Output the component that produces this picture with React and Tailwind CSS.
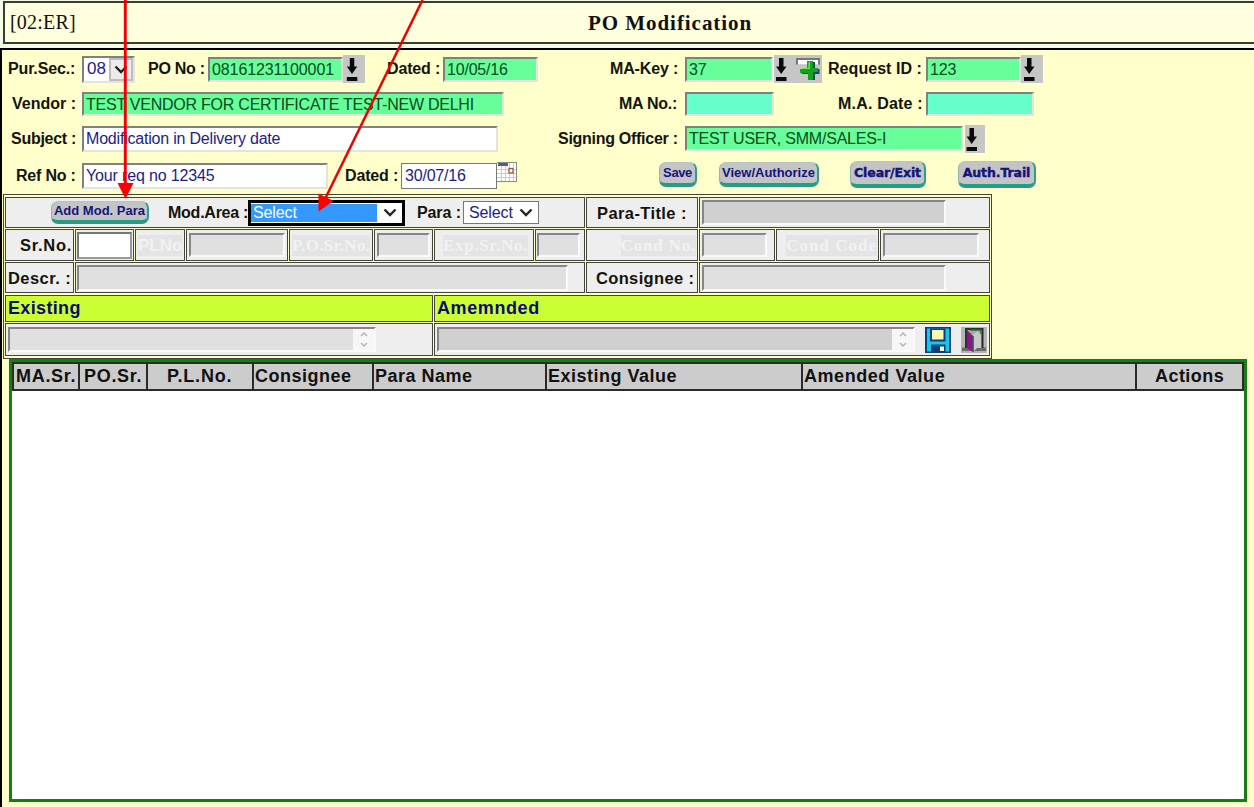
import React from "react";

const BLUE = "text-[#1c1c8c]";
const GREEN_TEXT = "text-[#0a4a1e]";
const SUNKEN = "border-2 border-t-[#808080] border-l-[#808080] border-b-[#e4e4dc] border-r-[#e4e4dc]";

function Label({ size = "text-[16px]", className = "", children }) {
  return (
    <span className={"block shrink-0 whitespace-pre leading-[18px] font-bold text-[#14140c] " + size + " " + className}>
      {children}
    </span>
  );
}

function Field({ className = "", children }) {
  return (
    <div className={"flex shrink-0 items-center whitespace-pre pt-px pl-[2px] text-[16px] leading-[18px] " + SUNKEN + " " + className}>
      {children}
    </div>
  );
}

function Chevron({ className = "" }) {
  return (
    <svg viewBox="0 0 14 9" className={"h-[9px] w-[14px] " + className} fill="none" stroke="#222" strokeWidth="2.4">
      <path d="M1.5 1.5 L7 7 L12.5 1.5" />
    </svg>
  );
}

function Fetch({ dx = 0, className = "w-[22px]" }) {
  return (
    <svg viewBox="0 0 22 28" preserveAspectRatio="xMinYMin slice" className={"h-[28px] shrink-0 bg-[#c6c6c6] " + className}>
      <g transform={`translate(${dx} 0)`} fill="#0a0a0a">
        <path d="M5 3h4.500v8.500h3L7.200 19 2 11.500h3z" />
        <rect x="2" y="22" width="10.500" height="4" />
      </g>
    </svg>
  );
}

function PlusIcon() {
  return (
    <svg viewBox="0 0 26 28" className="h-[28px] w-[26px] shrink-0 bg-[#c6c6c6]">
      <rect x="0" y="3" width="24" height="6.5" fill="#777" />
      <rect x="2" y="5" width="20" height="4.5" fill="#fff" />
      <path d="M12 7h7v7h4.500v5h-4.500v6h-6v-6h-7v-5H12z" fill="#1d3f6e" />
      <path d="M11 6h6v7h5v4h-5v8h-5v-7H4v-4h7z" fill="#12a51c" />
      <path d="M12.500 7h1.500v7H6v-1h6.500z" fill="#6be05a" />
    </svg>
  );
}

function CalendarIcon() {
  return (
    <svg viewBox="0 0 20 20" className="-mt-[7px] h-[20px] w-[20px] shrink-0">
      <rect width="20" height="20" fill="#8e8a82" />
      <rect x="0" y="1" width="19" height="18" fill="#fff" />
      <rect x="1" y="1" width="10" height="3" fill="#4b5ca8" />
      <path d="M4.500 4v15M8.500 4v15M12.500 1v18M16.500 1v18M0 7.500h19M0 11.500h19M0 15.500h19" stroke="#c9c9dc" strokeWidth="1" />
      <rect x="12" y="6.500" width="4" height="4.500" fill="#fff" stroke="#a5523f" strokeWidth="1.300" />
    </svg>
  );
}

function SaveIcon() {
  return (
    <svg viewBox="0 0 26 26" className="h-[26px] w-[26px] shrink-0">
      <rect width="26" height="26" fill="#0b3f7c" />
      <rect x="2" y="1.500" width="22" height="23" fill="#14c8ea" />
      <rect x="5" y="1.500" width="15.500" height="13" fill="#0b3f7c" />
      <rect x="7" y="3" width="11.500" height="9.500" fill="#fbf7b0" />
      <rect x="6" y="17.500" width="14.500" height="7.500" fill="#0b3f7c" />
      <rect x="15" y="19.500" width="4" height="4.500" fill="#fbf7b0" />
    </svg>
  );
}

function ExitIcon() {
  return (
    <svg viewBox="0 0 26 26" className="h-[26px] w-[26px] shrink-0 bg-[#b4b4b4]">
      <rect x="1" y="20.500" width="24" height="3.500" fill="#6a6a6a" />
      <path d="M5 21V2h16.500v19" fill="#a8a8a8" stroke="#2e2e2e" strokeWidth="2" />
      <path d="M6 3l6 6v16l-6-4z" fill="#8c1390" />
      <path d="M12 8l4-4 4 4v13h-4l-4 4z" fill="#c8c8c8" />
      <path d="M9 3h11v4M12.200 9v16" fill="none" stroke="#1d7a2b" strokeWidth="1.300" />
    </svg>
  );
}

const NORMAL = "text-[13px]";
const BLACK = "font-['DejaVu_Sans',sans-serif] text-[12.5px] tracking-[-0.1px] [-webkit-text-stroke:0.4px_#14147c]";

function Button({ type = NORMAL, className = "", children }) {
  return (
    <button
      className={
        "flex shrink-0 justify-center whitespace-pre rounded-[7px] border border-r-2 border-b-4 border-t-[#b4c4be] border-l-[#8cb8ac] border-r-[#2aa08a] border-b-[#259c86] bg-[#c4c4c4] leading-[16px] font-bold text-[#14147c] " +
        type + " " + className
      }
    >
      {children}
    </button>
  );
}

function Cell({ className = "", children }) {
  return (
    <div className={"flex shrink-0 items-center border border-[#45453a] " + className}>{children}</div>
  );
}

const DARK = "border-2 border-t-[#85858a] border-l-[#85858a] border-b-[#fafafa] border-r-[#fafafa]";

function Disabled({ className = "" }) {
  return <div className={"shrink-0 " + DARK + " " + className} />;
}

function Ghost({ face = "font-['Liberation_Serif',serif]", className = "", children }) {
  return (
    <span className={"block whitespace-pre bg-[#e4e4e4] text-[17px] leading-[21px] font-bold text-[#f2f2f2] " + face + " " + className}>
      {children}
    </span>
  );
}

function Spinner() {
  return (
    <div className="flex h-full w-[21px] flex-col items-center justify-between bg-[#f6f6f6] py-[3px]">
      <svg viewBox="0 0 8 5" className="h-[5px] w-[8px]" fill="none" stroke="#b5b5b5" strokeWidth="1.500"><path d="M1 4l3-3 3 3" /></svg>
      <svg viewBox="0 0 8 5" className="h-[5px] w-[8px]" fill="none" stroke="#b5b5b5" strokeWidth="1.500"><path d="M1 1l3 3 3-3" /></svg>
    </div>
  );
}

function Head({ className = "", children }) {
  return (
    <div className={"shrink-0 whitespace-pre border-r-2 border-[#2a2a2a] text-[18px] leading-[25px] font-bold text-[#111] last:border-r-0 " + className}>
      {children}
    </div>
  );
}

function Pointers() {
  return (
    <svg className="pointer-events-none absolute top-0 left-0 h-[220px] w-[500px]" viewBox="0 0 500 220">
      <path d="M125.300 0V186" stroke="#f00000" strokeWidth="2.900" />
      <path d="M422.500 0L325 199" stroke="#f00000" strokeWidth="2.500" />
      <path d="M117.500 183h16l-8 16z" fill="#ff0000" />
      <path d="M318.500 211.500V193.500l15 7.500z" fill="#ff0000" />
    </svg>
  );
}

export default function App() {
  return (
    <div className="relative h-[807px] w-[1254px] overflow-hidden bg-[#ffffcc] font-['Liberation_Sans',Arial,sans-serif]">
      <header className="flex h-[48px] flex-col bg-[#f4fbe4] pl-[3px]">
        <div className="mt-px flex h-[43px] items-center border-2 border-r-0 border-[#3c3c34] bg-[#ffffdd] font-['Liberation_Serif',serif] text-[#111]">
          <span className="-mt-[2px] ml-[5px] w-[578px] text-[20px] leading-[24px] tracking-[0.2px]">[02:ER]</span>
          <h1 className="whitespace-pre text-[21px] leading-[24px] font-bold tracking-[0.95px]">PO Modification</h1>
        </div>
      </header>

      <main className="h-[760px] border-t-2 border-l-2 border-black">
        <section className="h-[144px]">
          <div className="flex h-[38px] items-center">
            <Label className="ml-[6px] w-[74px] tracking-[-0.15px]">Pur.Sec.:</Label>
            <div className={"flex h-[27px] w-[53px] items-center bg-white text-[17px] " + SUNKEN + " " + BLUE}>
              <span className="w-[25px] pl-[3px]">08</span>
              <span className="flex h-full w-[24px] items-center justify-center border-2 border-[#bdbdbd] bg-[#ececec]"><Chevron /></span>
            </div>
            <Label className="ml-[13px] w-[60px] tracking-[-0.25px]">PO No :</Label>
            <Field className={"h-[25px] w-[135px] bg-[#66ff99] tracking-[-0.1px] " + GREEN_TEXT}>08161231100001</Field>
            <Fetch dx={1.800} />
            <Label className="ml-[22px] w-[56px] tracking-[-0.15px]">Dated :</Label>
            <Field className={"h-[25px] w-[95px] bg-[#66ff99] tracking-[-0.2px] " + GREEN_TEXT}>10/05/16</Field>
            <Label className="ml-[72px] w-[75px] tracking-[-0.15px]">MA-Key :</Label>
            <Field className={"h-[25px] w-[88px] bg-[#66ff99] tracking-[-0.2px] " + GREEN_TEXT}>37</Field>
            <Fetch className="ml-px w-[22px]" />
            <PlusIcon />
            <Label className="ml-[6px] w-[98px] tracking-[0.05px]">Request ID :</Label>
            <Field className={"h-[25px] w-[95px] bg-[#66ff99] tracking-[-0.2px] " + GREEN_TEXT}>123</Field>
            <Fetch dx={1} />
          </div>
          <div className="flex h-[32px] items-center">
            <Label className="ml-[10px] w-[70px]">Vendor :</Label>
            <Field className={"h-[24px] w-[422px] bg-[#66ff99] tracking-[-0.24px] " + GREEN_TEXT}>TEST VENDOR FOR CERTIFICATE TEST-NEW DELHI</Field>
            <Label className="ml-[115px] w-[66px] tracking-[-0.25px]">MA No.:</Label>
            <Field className="h-[24px] w-[89px] bg-[#66ffcc]" />
            <Label className="ml-[64px] w-[88px] tracking-[0.2px]">M.A. Date :</Label>
            <Field className="h-[24px] w-[108px] bg-[#66ffcc]" />
          </div>
          <div className="flex h-[37px] items-center">
            <Label className="ml-[9px] w-[71px] tracking-[-0.28px]">Subject :</Label>
            <Field className={"h-[26px] w-[416px] bg-white tracking-[-0.2px] " + BLUE}>Modification in Delivery date</Field>
            <Label className="ml-[60px] w-[127px] tracking-[-0.28px]">Signing Officer :</Label>
            <Field className={"h-[25px] w-[278px] bg-[#66ff99] tracking-[-0.2px] " + GREEN_TEXT}>TEST USER, SMM/SALES-I</Field>
            <Fetch dx={-0.500} className="ml-[2px] w-[20px]" />
          </div>
          <div className="flex h-[37px] items-center">
            <Label className="ml-[14px] w-[66px] tracking-[-0.2px]">Ref No :</Label>
            <Field className={"h-[26px] w-[246px] bg-white tracking-[-0.15px] " + BLUE}>Your req no 12345</Field>
            <Label className="ml-[17px] w-[56px] tracking-[-0.15px]">Dated :</Label>
            <div className={"flex h-[26px] w-[96px] items-center border border-[#777] bg-white pt-px pl-[3px] text-[16px] tracking-[-0.2px] " + BLUE}>30/07/16</div>
            <CalendarIcon />
            <Button className="-mt-[2px] ml-[142px] h-[25px] w-[38px] pt-[2px] tracking-[-0.4px]">Save</Button>
            <Button className="-mt-[2px] ml-[22px] h-[25px] w-[100px] pt-[2px]">View/Authorize</Button>
            <Button type={BLACK} className="-mt-[2px] ml-[31px] h-[27px] w-[76px] pt-[3px]">Clear/Exit</Button>
            <Button type={BLACK} className="-mt-[2px] ml-[32px] h-[27px] w-[78px] pt-[3px]">Auth.Trail</Button>
          </div>
        </section>

        <section className="ml-px flex h-[165px] w-[989px] flex-col border border-[#45453a] px-px pt-[2px]">
          <div className="mb-px flex h-[31px] gap-px">
            <Cell className="w-[580px] bg-[#eeeeee]">
              <Button className="ml-[45px] h-[23px] w-[98px] pt-px">Add Mod. Para</Button>
              <Label className="ml-[19px] w-[80px] tracking-[-0.25px]">Mod.Area :</Label>
              <div className="flex h-[26px] w-[157px] items-center border-[3px] border-black bg-white">
                <span className="h-[18px] w-[126px] bg-[#3399ff] pl-[2px] text-[16px] leading-[18px] tracking-[-0.1px] text-white">Select</span>
                <span className="flex flex-1 justify-center"><Chevron /></span>
              </div>
              <Label className="ml-[12px] w-[46px] tracking-[-0.1px]">Para :</Label>
              <div className={"flex h-[23px] w-[76px] items-center border border-[#777] bg-white pl-[5px] text-[16px] tracking-[-0.1px] " + BLUE}>
                <span className="w-[50px]">Select</span>
                <Chevron />
              </div>
            </Cell>
            <Cell className="w-[112px] bg-[#eeeeee]">
              <Label size="text-[16.5px]" className="ml-[10px] tracking-[0.4px]">Para-Title :</Label>
            </Cell>
            <Cell className="w-[291px] bg-[#eeeeee]"><Disabled className="ml-[2px] h-[25px] w-[244px] bg-[#d0d0d0]" /></Cell>
          </div>
          <div className="mb-px flex h-[32px] gap-px">
            <Cell className="w-[69px] justify-end bg-[#eeeeee]"><Label size="text-[16.5px]" className="mr-px tracking-[0.7px]">Sr.No.</Label></Cell>
            <Cell className="w-[59px] bg-[#eeeeee]"><div className="ml-px h-[27px] w-[55px] border-2 border-t-[#77777a] border-l-[#77777a] border-b-[#999] border-r-[#999] bg-white" /></Cell>
            <Cell className="w-[50px] bg-[#eeeeee]"><Ghost face="font-['Liberation_Sans',sans-serif]" className="ml-[2px] tracking-[0px]">PLNo</Ghost></Cell>
            <Cell className="w-[102px] bg-[#eeeeee]"><Disabled className="ml-[2px] h-[24px] w-[96px] bg-[#e0e0e0]" /></Cell>
            <Cell className="w-[84px] bg-[#eeeeee]"><Ghost className="ml-[2px] tracking-[0.3px]">P.O.Sr.No.</Ghost></Cell>
            <Cell className="w-[59px] bg-[#eeeeee]"><Disabled className="ml-[2px] h-[24px] w-[53px] bg-[#e0e0e0]" /></Cell>
            <Cell className="w-[100px] bg-[#eeeeee]"><Ghost className="ml-[8px] tracking-[0.7px]">Exp.Sr.No.</Ghost></Cell>
            <Cell className="w-[50px] bg-[#eeeeee]"><Disabled className="ml-px h-[24px] w-[43px] bg-[#e0e0e0]" /></Cell>
            <Cell className="w-[112px] justify-end bg-[#eeeeee]"><Ghost className="mr-px tracking-[0.8px]">Cond No.</Ghost></Cell>
            <Cell className="w-[76px] bg-[#eeeeee]"><Disabled className="ml-[2px] h-[24px] w-[65px] bg-[#e0e0e0]" /></Cell>
            <Cell className="w-[103px] justify-end bg-[#eeeeee]"><Ghost className="mr-px tracking-[1px]">Cond Code</Ghost></Cell>
            <Cell className="w-[110px] bg-[#eeeeee]"><Disabled className="ml-[2px] h-[24px] w-[96px] bg-[#e0e0e0]" /></Cell>
          </div>
          <div className="mb-[2px] flex h-[31px] gap-px">
            <Cell className="w-[69px] bg-[#eeeeee]"><Label size="text-[16.5px]" className="ml-[2px] tracking-[0.45px]">Descr. :</Label></Cell>
            <Cell className="w-[510px] bg-[#eeeeee]"><Disabled className="ml-px h-[26px] w-[491px] bg-[#e0e0e0]" /></Cell>
            <Cell className="w-[112px] bg-[#eeeeee]"><Label size="text-[16.5px]" className="ml-[9px] tracking-[0.35px]">Consignee :</Label></Cell>
            <Cell className="w-[291px] bg-[#eeeeee]"><Disabled className="ml-[2px] h-[26px] w-[244px] bg-[#e0e0e0]" /></Cell>
          </div>
          <div className="mb-px flex h-[27px] gap-px text-[18px] leading-[22px] font-bold text-[#0c0c70]">
            <Cell className="w-[428px] bg-[#ccff33] pb-[2px] pl-[2px] tracking-[0.35px]">Existing</Cell>
            <Cell className="w-[556px] bg-[#ccff33] pb-[2px] pl-[2px] tracking-[0.6px]">Amemnded</Cell>
          </div>
          <div className="flex h-[33px] gap-px">
            <Cell className="w-[428px] bg-[#eeeeee]">
              <div className={"ml-[2px] flex h-[25px] w-[368px] justify-end bg-[#e0e0e0] " + DARK}><Spinner /></div>
            </Cell>
            <Cell className="w-[556px] bg-[#eeeeee]">
              <div className={"ml-[2px] flex h-[25px] w-[478px] justify-end bg-[#d0d0d0] " + DARK}><Spinner /></div>
              <div className="ml-[10px] flex gap-[10px]"><SaveIcon /><ExitIcon /></div>
            </Cell>
          </div>
        </section>

        <section className="ml-[7px] h-[443px] w-[1238px] border-[3px] border-[#148014] bg-white">
          <div className="flex h-[29px] border-2 border-[#2a2a2a] bg-[#cccccc]">
            <Head className="w-[66px] pl-[2px] tracking-[0.7px]">MA.Sr.</Head>
            <Head className="w-[68px] pl-[4px] tracking-[0.7px]">PO.Sr.</Head>
            <Head className="w-[106px] pl-[19px] tracking-[0.8px]">P.L.No.</Head>
            <Head className="w-[120px] pl-px tracking-[0.5px]">Consignee</Head>
            <Head className="w-[173px] pl-px tracking-[0.5px]">Para Name</Head>
            <Head className="w-[256px] pl-px tracking-[0.5px]">Existing Value</Head>
            <Head className="w-[334px] pl-px tracking-[0.55px]">Amended Value</Head>
            <Head className="flex-1 pl-[18px] tracking-[0.45px]">Actions</Head>
          </div>
        </section>
      </main>
      <Pointers />
    </div>
  );
}
